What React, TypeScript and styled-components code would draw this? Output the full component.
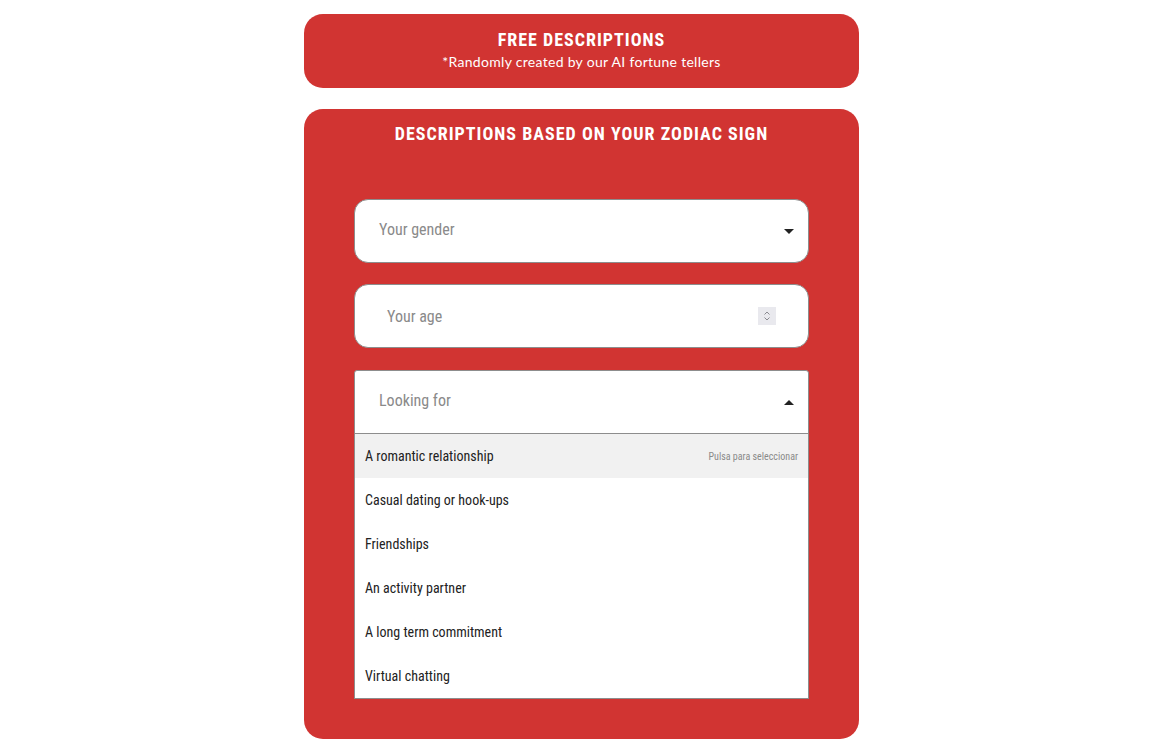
import React from "react";
import styled, { createGlobalStyle } from "styled-components";

const GlobalStyle = createGlobalStyle`
  html, body {
    margin: 0;
    padding: 0;
    background: #ffffff;
  }
  body {
    font-family: Roboto, "Liberation Sans", sans-serif;
  }
`;

const condensed = `"Roboto Condensed", "Liberation Sans Narrow", "DejaVu Sans Condensed", Roboto, sans-serif`;

const options = [
  "A romantic relationship",
  "Casual dating or hook-ups",
  "Friendships",
  "An activity partner",
  "A long term commitment",
  "Virtual chatting",
];

export default function App() {
  return (
    <>
      <GlobalStyle />
      <Page>
        <TopCard>
          <Heading>FREE DESCRIPTIONS</Heading>
          <Subtitle>*Randomly created by our AI fortune tellers</Subtitle>
        </TopCard>
        <MainCard>
          <Heading>DESCRIPTIONS BASED ON YOUR ZODIAC SIGN</Heading>
          <Form>
            <Field>
              <Placeholder $lift>Your gender</Placeholder>
              <Caret />
            </Field>
            <Field $inset>
              <Placeholder>Your age</Placeholder>
              <Spinner>
                <svg width="8" height="12" viewBox="0 0 8 12" fill="none" stroke="#8a8a90" strokeWidth="1">
                  <path d="M1.5 4.5 L4 2 L6.5 4.5" />
                  <path d="M1.5 7.5 L4 10 L6.5 7.5" />
                </svg>
              </Spinner>
            </Field>
            <Dropdown>
              <Field $open>
                <Placeholder $lift>Looking for</Placeholder>
                <Caret $up />
              </Field>
              <List>
                {options.map((o, i) => (
                  <Option key={o} $active={i === 0}>
                    <span>{o}</span>
                    {i === 0 && <Hint>Pulsa para seleccionar</Hint>}
                  </Option>
                ))}
              </List>
            </Dropdown>
          </Form>
        </MainCard>
      </Page>
    </>
  );
}

const Page = styled.div`
  width: 555px;
  margin: 0 auto;
  padding-top: 14px;
  display: flex;
  flex-direction: column;
  gap: 21px;
`;

const Card = styled.div`
  background: #d13432;
  border-radius: 19px;
  color: #ffffff;
`;

const TopCard = styled(Card)`
  height: 74px;
  display: flex;
  flex-direction: column;
  align-items: center;
  justify-content: center;
  gap: 2px;
  padding-bottom: 2px;
  box-sizing: border-box;
`;

const MainCard = styled(Card)`
  height: 630px;
  padding: 14px 50px 0;
  box-sizing: border-box;
  display: flex;
  flex-direction: column;
  align-items: center;
`;

const Heading = styled.div`
  font-family: ${condensed};
  font-weight: 700;
  font-size: 18px;
  letter-spacing: 1px;
  line-height: 22px;
`;

const Subtitle = styled.div`
  font-family: Lato, "Open Sans", sans-serif;
  font-size: 14px;
  letter-spacing: 0.3px;
  line-height: 18px;
`;

const Form = styled.div`
  width: 100%;
  margin-top: 54px;
  display: flex;
  flex-direction: column;
  gap: 21px;
`;

const Field = styled.div<{ $inset?: boolean; $open?: boolean }>`
  height: 64px;
  flex-shrink: 0;
  box-sizing: border-box;
  background: #ffffff;
  border: 1px solid #8d8d8d;
  border-radius: ${(p) => (p.$open ? "3px 3px 0 0" : "14px")};
  padding: 0 ${(p) => (p.$inset ? "32px" : "14px")} 0 ${(p) => (p.$inset ? "32px" : "24px")};
  display: flex;
  align-items: center;
  justify-content: space-between;
`;

const Placeholder = styled.span<{ $lift?: boolean }>`
  font-family: ${condensed};
  font-size: 16px;
  color: #8a8a8a;
  margin-bottom: ${(p) => (p.$lift ? "4px" : "0")};
`;

const Caret = styled.span<{ $up?: boolean }>`
  width: 0;
  height: 0;
  border-left: 5px solid transparent;
  border-right: 5px solid transparent;
  ${(p) =>
    p.$up ? "border-bottom: 5px solid #222;" : "border-top: 5px solid #222;"}
`;

const Spinner = styled.span`
  width: 18px;
  height: 18px;
  background: #e9e9ee;
  display: flex;
  align-items: center;
  justify-content: center;
`;

const Dropdown = styled.div`
  margin-top: 1px;
  display: flex;
  flex-direction: column;
`;

const List = styled.div`
  background: #ffffff;
  border: 1px solid #8d8d8d;
  border-top: none;
`;

const Option = styled.div<{ $active?: boolean }>`
  height: 44px;
  padding: 0 10px;
  display: flex;
  align-items: center;
  justify-content: space-between;
  background: ${(p) => (p.$active ? "#f1f1f1" : "#ffffff")};
  font-family: ${condensed};
  font-size: 14px;
  color: #222222;
`;

const Hint = styled.span`
  font-size: 10px;
  color: #8a8a8a;
`;
